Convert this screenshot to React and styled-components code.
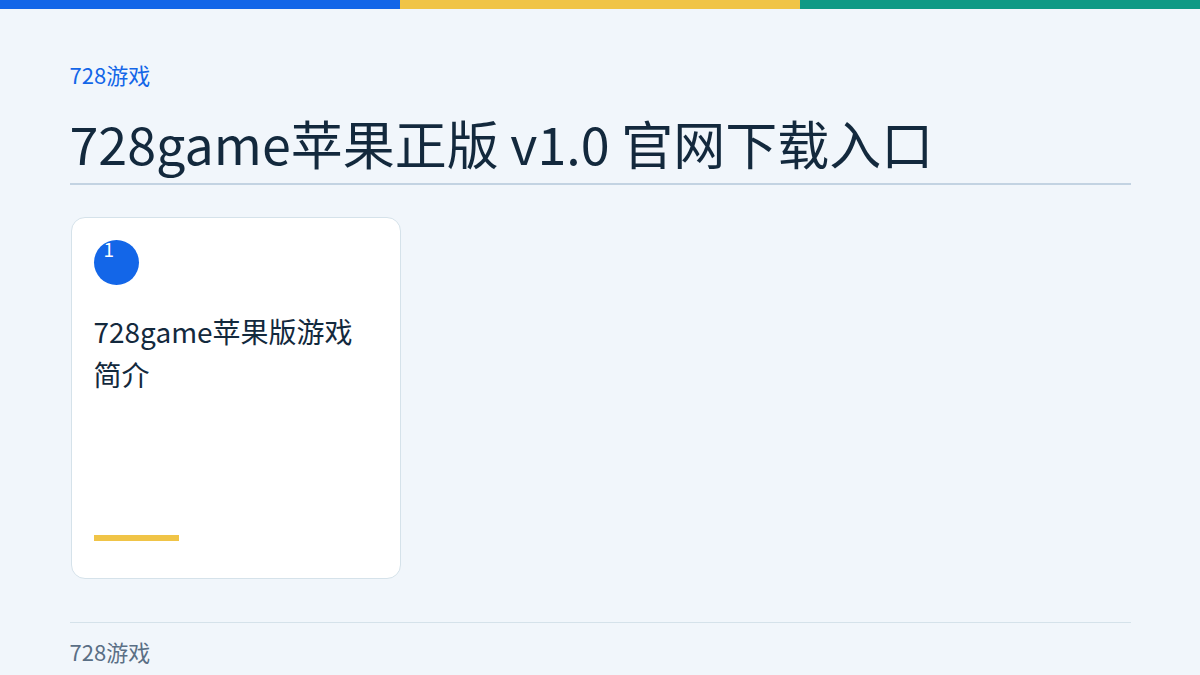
import React from "react";
import styled, { createGlobalStyle } from "styled-components";

const GlobalStyle = createGlobalStyle`
  body {
    margin: 0;
    background: #f1f6fb;
    font-family: "Noto Sans CJK SC", "Noto Sans", sans-serif;
    color: #13293d;
  }
`;

const TopBar = styled.div`
  display: grid;
  grid-template-columns: repeat(3, 1fr);
  height: 9px;
`;

const BarPart = styled.div`
  background: ${(p) => p.color};
`;

const Main = styled.main`
  max-width: 1061px;
  margin: 0 auto;
  padding: 50px 0 0;
`;

const Crumb = styled.a`
  display: block;
  font-size: 22px;
  line-height: 30px;
  color: #1366e8;
  text-decoration: none;
`;

const Title = styled.h1`
  margin: 23px 0 0;
  padding-bottom: 9px;
  font-size: 52px;
  line-height: 62px;
  font-weight: 400;
  color: #13293d;
  border-bottom: 2px solid #c3d3e2;
`;

const Grid = styled.section`
  display: grid;
  grid-template-columns: 330px;
  margin-top: 32px;
  padding-left: 1px;
`;

const Card = styled.article`
  box-sizing: border-box;
  height: 362px;
  display: flex;
  flex-direction: column;
  padding: 22px 22px 37px;
  background: #fff;
  border: 1px solid #d5e2ea;
  border-radius: 14px;
`;

const Num = styled.span`
  display: block;
  box-sizing: border-box;
  width: 45px;
  height: 45px;
  border-radius: 50%;
  background: #1366e8;
  color: #fff;
  font-size: 19px;
  line-height: 17px;
  padding: 0 0 0 10px;
`;

const CardTitle = styled.h2`
  margin: 25px 0 0;
  font-size: 28px;
  line-height: 43px;
  font-weight: 400;
  color: #13293d;
`;

const Accent = styled.div`
  margin-top: auto;
  width: 85px;
  height: 6px;
  background: #f0c447;
`;

const Footer = styled.footer`
  margin-top: 43px;
  padding-top: 13px;
  border-top: 1px solid #d5e2ea;
  font-size: 22px;
  line-height: 30px;
  color: #5a6f85;
`;

export default function App() {
  return (
    <>
      <GlobalStyle />
      <TopBar>
        <BarPart color="#1366e8" />
        <BarPart color="#f0c447" />
        <BarPart color="#0e9a85" />
      </TopBar>
      <Main>
        <Crumb href="#">728游戏</Crumb>
        <Title>728game苹果正版 v1.0 官网下载入口</Title>
        <Grid>
          <Card>
            <Num>1</Num>
            <CardTitle>728game苹果版游戏简介</CardTitle>
            <Accent />
          </Card>
        </Grid>
        <Footer>728游戏</Footer>
      </Main>
    </>
  );
}
